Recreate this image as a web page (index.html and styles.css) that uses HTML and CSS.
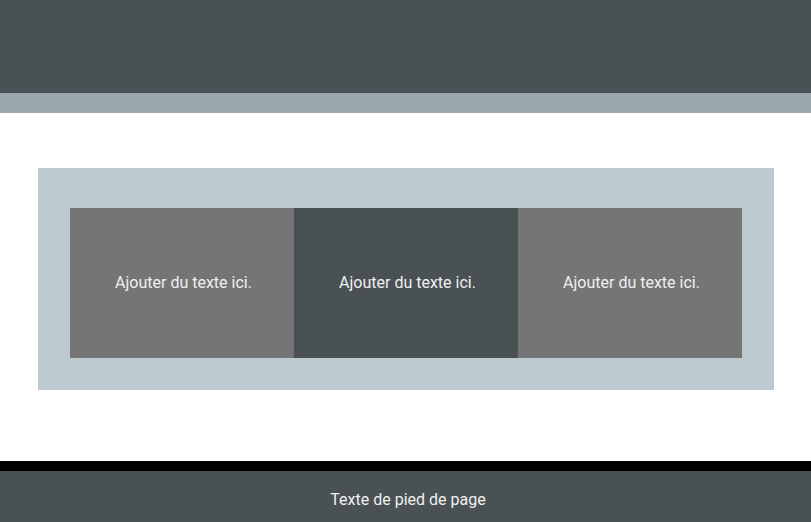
FILE: index.html
```html
<!DOCTYPE html>
<html lang="fr">
<head>
<meta charset="utf-8">
<title>Page</title>
<link rel="stylesheet" href="styles.css">
</head>
<body>
<header class="header"></header>
<div class="band"></div>
<main class="main">
  <section class="panel">
    <div class="cell cell-grey">Ajouter du texte ici.</div>
    <div class="cell cell-dark">Ajouter du texte ici.</div>
    <div class="cell cell-grey">Ajouter du texte ici.</div>
  </section>
</main>
<div class="rule"></div>
<footer class="footer">Texte de pied de page</footer>
</body>
</html>
```
FILE: styles.css
```css
html, body {
  margin: 0;
  padding: 0;
  background: #ffffff;
  font-family: Roboto, "Liberation Sans", sans-serif;
}
.header {
  height: 93px;
  background: #495155;
}
.band {
  height: 20px;
  background: #9aa8ad;
}
.main {
  padding: 55px 37px 71px 38px;
}
.panel {
  background: #bcc9cf;
  padding: 40px 32px 32px 32px;
  display: grid;
  grid-template-columns: 224px 224px 224px;
}
.cell {
  height: 150px;
  display: flex;
  align-items: center;
  justify-content: center;
  color: #f0f0f0;
  font-size: 16px;
  padding-left: 3px;
  padding-bottom: 2px;
  box-sizing: border-box;
}
.cell-grey { background: #757575; }
.cell-dark { background: #495155; }
.rule {
  height: 10px;
  background: #000000;
}
.footer {
  height: 51px;
  background: #495155;
  color: #f0f0f0;
  font-size: 16px;
  display: flex;
  align-items: center;
  justify-content: center;
  padding-top: 6px;
  padding-left: 5px;
  box-sizing: border-box;
}
```
